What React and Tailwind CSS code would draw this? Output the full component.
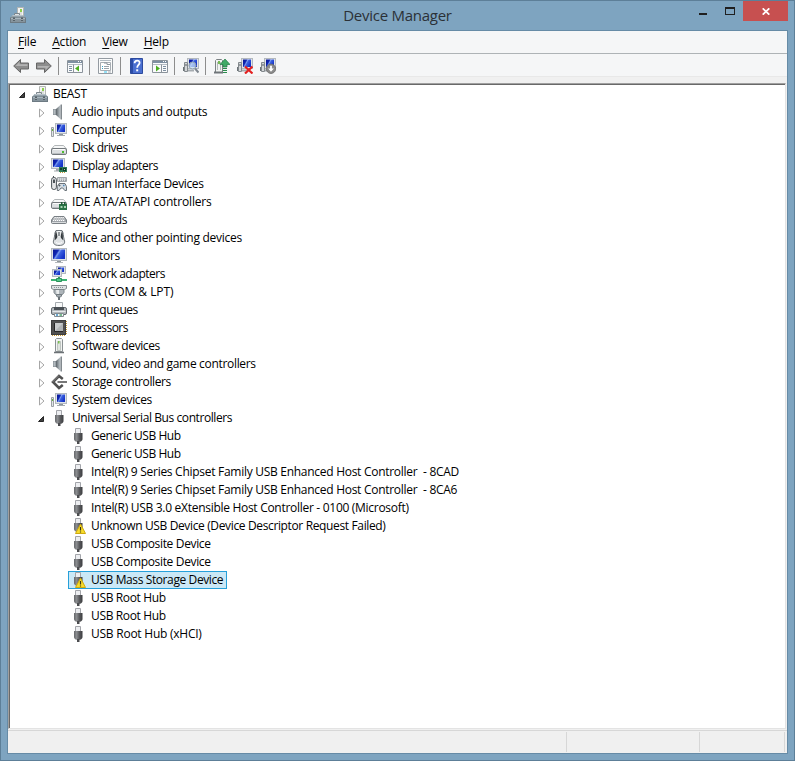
import { useId } from 'react'
import clsx from 'clsx'

function Svg({ children, className }) {
  return (
    <svg width="16" height="16" viewBox="0 0 16 16" className={clsx('block shrink-0', className)}>
      {children}
    </svg>
  )
}

// 16px device glyphs
function ToolboxIcon() {
  return (
    <Svg>
      <path d="M7.500.5h6v9h-6z" fill="#f3f4f3" stroke="#b2b5b3" />
      <path d="M10 2h2v3h-2z" fill="#8fcf4d" />
      <path d="M9 6h3M9 8h3" stroke="#c5cac6" />
      <path d="M4.500 9V6.500h5V9" fill="#dfe3e5" stroke="#7c868d" />
      <path d="M2.500 8h11l2.500 3H0z" fill="#93a1aa" />
      <path d="M2.500 8.500h11" stroke="#b7c2c9" />
      <path d="M0 10.500h16V16H0z" fill="#6d7a83" />
      <path d="M1 11h14v1.500H1z" fill="#a9b6be" />
      <path d="M1 12.500h14V15H1z" fill="#86949d" />
      <path d="M3 10.500h2V14H3zM11 10.500h2V14h-2z" fill="#56626a" />
      <path d="M3.500 12h1v1h-1zM11.500 12h1v1h-1z" fill="#dfe5e8" />
    </Svg>
  )
}

function SpeakerIcon() {
  const id = useId()
  return (
    <Svg>
      <linearGradient id={id}>
        <stop offset="0" stopColor="#5c6469" />
        <stop offset=".6" stopColor="#a3abb0" />
        <stop offset="1" stopColor="#cfd4d7" />
      </linearGradient>
      <path d="M2 5h3.500v6H2z" fill="#838b91" />
      <path d="M2.500 5.500h2v5h-2z" fill="#b3babf" />
      <path d="M5 5L10 .5v15L5 11z" fill={`url(#${id})`} />
      <path d="M9.700.5H11v15H9.700z" fill="#82898e" />
    </Svg>
  )
}

function Screen({ x = 4, y = 1, w = 12, h = 9 }) {
  const id = useId()
  return (
    <g>
      <linearGradient id={id} x1="0" y1="0" x2="1" y2=".5">
        <stop offset="0" stopColor="#0a1690" />
        <stop offset=".38" stopColor="#0f26b4" />
        <stop offset=".5" stopColor="#7c9cf0" />
        <stop offset=".62" stopColor="#3a60e0" />
        <stop offset="1" stopColor="#1634c8" />
      </linearGradient>
      <rect x={x + 0.5} y={y + 0.5} width={w - 1} height={h - 1} fill="#dfe3e8" stroke="#b3b9bf" />
      <rect x={x + 2} y={y + 1.5} width={w - 4} height={h - 3.5} fill={`url(#${id})`} />
    </g>
  )
}

function ComputerIcon() {
  return (
    <Svg>
      <Screen y={1} x={4} w={12} h={11} />
      <path d="M8 12h4v1H8z" fill="#8d969d" />
      <path d="M6 13.500h8" stroke="#a4abb0" />
      <path d="M.5 5.500h2v9h-2z" fill="#e3e6e8" stroke="#9ba0a4" />
      <path d="M1 7h1v2H1z" fill="#65b63f" />
    </Svg>
  )
}

function DriveShape() {
  return (
    <g>
      <path d="M3.500 5.500h9l3 3.500H.5z" fill="#f6f7f7" stroke="#b2b6b8" />
      <rect x=".5" y="8.500" width="15" height="6" rx="1.500" fill="#dcdfe1" stroke="#73797d" />
      <path d="M2 9.500h12" stroke="#fbfbfb" />
      <path d="M2 13.500h12" stroke="#b9bdc0" />
    </g>
  )
}

function DiskIcon() {
  return (
    <Svg>
      <DriveShape />
      <path d="M11 11h2v2h-2z" fill="#4cbb2e" />
    </Svg>
  )
}

function DisplayIcon() {
  return (
    <Svg>
      <Screen x={0} y={0} w={14} h={11} />
      <path d="M5 11h3v1.500H5zM3 12.500h6v1H3z" fill="#a0a7ac" />
      <path d="M8 9h8v5H8z" fill="#2c7a55" />
      <path d="M9 10h2v2H9zM12 10h3v3h-3z" fill="#123f2b" />
      <path d="M13 11h1v1h-1z" fill="#a4d7b8" />
      <path d="M9 14.500h6" stroke="#c59b3c" strokeDasharray="1" />
    </Svg>
  )
}

function HidIcon() {
  return (
    <Svg>
      <path d="M6.500 1.500h9v4h-9z" fill="#d6d9dc" stroke="#a2a7ab" />
      <path d="M8 3h7M8 4.500h7" stroke="#8d9398" strokeWidth=".8" strokeDasharray="1" />
      <path d="M2.500 0v3" stroke="#4a5157" />
      <rect x=".6" y="1.500" width="4.800" height="12" rx="2.200" fill="#e4e6e8" stroke="#4b5258" />
      <path d="M2 3.500h2v3.500H2z" fill="#4b5258" />
      <path d="M8 7.500h6l1.500 3v4h-1.700l-2-2.500h-1.800l-2 2.500H6.300v-4z" fill="#d3dae0" stroke="#5c656c" strokeWidth=".9" />
      <path d="M7.500 9.500h2M8.500 8.500v2" stroke="#4b545b" strokeWidth=".8" />
      <path d="M12 9.500h1.500" stroke="#4f89bd" strokeWidth="1.500" />
    </Svg>
  )
}

function IdeIcon() {
  return (
    <Svg>
      <DriveShape />
      <path d="M8 10h8v6H8z" fill="#2b7446" />
      <path d="M10 8h1.500v3H10zM13 8h1.500v3H13z" fill="#235f38" />
      <path d="M9.500 12h2v2h-2zM13 12h2v2h-2z" fill="#a9d4b3" />
    </Svg>
  )
}

function KeyboardIcon() {
  return (
    <Svg>
      <path d="M3 4.500h10l2.500 3.500v2.500c0 .6-.4 1-1 1h-13c-.6 0-1-.4-1-1V8z" fill="#9da2a7" stroke="#7a8085" />
      <path d="M3.500 5.500h9.500M2.500 7h11M2 8.500h12" stroke="#fff" strokeDasharray="1.300 .7" />
      <path d="M1 10.500h14" stroke="#d9dcde" />
    </Svg>
  )
}

function MouseIcon() {
  return (
    <Svg>
      <path d="M5 .5h6c1.800 2.500 1 5.500 2.200 9 1.500 4-.7 6-5.200 6s-6.700-2-5.200-6C4 6 3.200 3 5 .5z" fill="#dfe2e4" stroke="#6f767b" />
      <path d="M5 1c-1.500 3-.3 6-1.500 9.500C5 9.500 6.500 7.500 6.500 6z" fill="#33383c" />
      <path d="M11 1c1.500 3 .3 6 1.500 9.500C11 9.500 9.500 7.500 9.500 6z" fill="#33383c" />
      <path d="M6.500 1h3v5.500h-3z" fill="#f3f4f5" />
      <path d="M7.300 2h1.400v4H7.300z" fill="#686f74" />
      <path d="M5 12.500c1.800 1.200 4.200 1.200 6 0" fill="none" stroke="#fff" />
    </Svg>
  )
}

function MonitorIcon() {
  return (
    <Svg>
      <Screen x={0} y={0} w={16} h={13} />
      <path d="M6 13h4v1H6z" fill="#8f979c" />
      <path d="M4 14.500h8" stroke="#b5babd" />
    </Svg>
  )
}

function NetworkIcon() {
  return (
    <Svg>
      <Screen x={5} y={0} w={10} h={8} />
      <Screen x={1} y={3} w={10} h={8} />
      <path d="M8 11v2" stroke="#2f9c63" strokeWidth="2" />
      <path d="M0 14h16" stroke="#3bb273" strokeWidth="2" />
      <path d="M5.500 12.500h5v3h-5z" fill="#52c78a" stroke="#2b9058" />
    </Svg>
  )
}

function PortIcon() {
  return (
    <Svg>
      <path d="M.5 1.500h15v3l-2 1h-11l-2-1z" fill="#dde1e3" stroke="#858c90" />
      <path d="M3 3.500h10" stroke="#8b9297" strokeDasharray="1" />
      <path d="M3 5.500h10v3l-1.500 2h-7L3 8.500z" fill="#aeb5ba" stroke="#7d858a" />
      <path d="M5 6h3v4H5.500z" fill="#e8ebec" />
      <path d="M5.500 10.500h5V12l-1 1h-3l-1-1z" fill="#a3abb0" stroke="#737b80" />
      <path d="M8 13v3" stroke="#6b7378" strokeWidth="2" />
    </Svg>
  )
}

function PrinterIcon() {
  return (
    <Svg>
      <path d="M4.500.5h7v6h-7z" fill="#f8f9f9" stroke="#a7acb0" />
      <rect x=".5" y="5.500" width="15" height="7" rx="1.500" fill="#b3b8bc" stroke="#646a6f" />
      <path d="M3 5h10v3H3z" fill="#4a5055" />
      <path d="M1.500 9.500h13" stroke="#e6e8ea" />
      <path d="M3.500 11.500h9v3h-9z" fill="#f4f7f8" stroke="#858c91" />
      <path d="M5 13h2" stroke="#3b8dc4" strokeWidth="1.500" />
      <path d="M8.500 13H11" stroke="#4ea46a" strokeWidth="1.500" />
    </Svg>
  )
}

function CpuIcon() {
  return (
    <Svg>
      <path d="M15.500 1v14M1 15.500h14" stroke="#c79a35" strokeDasharray="1" />
      <path d="M0 0h15v15H0z" fill="#3d3d3d" />
      <path d="M1 1h13v13H1z" fill="#505050" />
      <path d="M4 3h8v8H4z" fill="#c9cbcc" />
      <path d="M4 11l8-8v8z" fill="#b0b3b4" />
      <path d="M3.500 3v8.500H12" fill="none" stroke="#262626" />
    </Svg>
  )
}

function SoftwareIcon() {
  return (
    <Svg>
      <path d="M4.500 1.500l1-1h5l1 1v12h-7z" fill="#f2f4f2" stroke="#8b9194" />
      <path d="M6.500 3.500h3v9h-3z" fill="#dfe4df" stroke="#bfc5c1" />
      <path d="M7 3h1.500v2.500H7z" fill="#79bf4f" />
      <path d="M3 14.500h10" stroke="#6c7276" strokeWidth="1.500" />
    </Svg>
  )
}

function StorageIcon() {
  return (
    <Svg>
      <path d="M11.800 5L8 2 2 8l6 6 3.800-3" fill="none" stroke="#505050" strokeWidth="2.600" />
      <path d="M8 1.500L1.500 8" stroke="#858585" />
      <path d="M6.500 7H16v2H6.500z" fill="#777" />
    </Svg>
  )
}

function UsbShape() {
  const id = useId()
  return (
    <g>
      <linearGradient id={id}>
        <stop offset="0" stopColor="#66686b" />
        <stop offset=".3" stopColor="#8b8d90" />
        <stop offset=".65" stopColor="#58595c" />
        <stop offset="1" stopColor="#3c3d40" />
      </linearGradient>
      <path d="M5.500.5h5v5h-5z" fill="#edeef1" stroke="#a3a5aa" />
      <path d="M4 5h8.500v6c0 1.500-1.200 2.500-2.500 2.800H6.500C5.200 13.500 4 12.500 4 11z" fill={`url(#${id})`} />
      <path d="M7 13h2.500v3H7z" fill="#4b4c4f" />
    </g>
  )
}

function UsbIcon() {
  return <Svg><UsbShape /></Svg>
}

function UsbWarningIcon() {
  return (
    <Svg>
      <UsbShape />
      <path d="M10.500 6l5 9.500h-10z" fill="#f7dc2a" stroke="#cfa90e" strokeLinejoin="round" />
      <path d="M10.500 9v3.500M10.500 13.500v1" stroke="#3a3415" strokeWidth="1.200" />
    </Svg>
  )
}

// Toolbar glyphs
function ArrowIcon({ flip }) {
  return (
    <Svg className={flip && 'rotate-180'}>
      <path d="M.7 8L7.500 1.500V5h8v6h-8v3.500z" fill="#8d8d8d" stroke="#666" strokeLinejoin="round" />
      <path d="M2.500 8L6.500 4v2.200h8V8z" fill="#b4b4b4" />
    </Svg>
  )
}

function PanelIcon({ right }) {
  return (
    <Svg>
      <path d="M.5 2.500h15v12H.5z" fill="#fafbfc" stroke="#8b939b" />
      <path d="M1 4h14" stroke="#7e8fa1" strokeWidth="2" />
      <path d="M11 3.500h1M13 3.500h1" stroke="#fff" />
      <path d="M1 6.500h14" stroke="#b4bcc4" />
      {right ? (
        <>
          <path d="M9.500 6.500v8" stroke="#8b939b" />
          <path d="M11 8.500h3M11 10.500h3M11 12.500h3" stroke="#7e8fa1" />
          <path d="M4 7.500v6l4-3z" fill="#4cae1f" />
        </>
      ) : (
        <>
          <path d="M6.500 6.500v8" stroke="#8b939b" />
          <path d="M2 8.500h3M2 10.500h3M2 12.500h3" stroke="#7e8fa1" />
          <path d="M12 7.500v6l-4-3z" fill="#4cae1f" />
        </>
      )}
    </Svg>
  )
}

function PropertiesIcon() {
  return (
    <Svg>
      <path d="M.5.5h14v15H.5z" fill="#fbfcfc" stroke="#949ba2" />
      <path d="M2 2.500h11" stroke="#b3bcc4" />
      <path d="M2.500 4.500h10v8h-10z" fill="#fff" stroke="#a7adb3" />
      <path d="M6 5h3v1.500h3" fill="none" stroke="#8d969f" />
      <path d="M4 8.500h1M4 10.500h1" stroke="#36a3c9" />
      <path d="M6 8.500h5M6 10.500h5" stroke="#9aa3ab" />
      <path d="M6 14h3" stroke="#30c4ee" />
      <path d="M10 14h3" stroke="#a7adb3" />
    </Svg>
  )
}

function HelpIcon() {
  return (
    <Svg>
      <path d="M1.500.5h12v15h-12z" fill="#4a6fd0" stroke="#2c4a9e" />
      <path d="M2 1h2v14H2z" fill="#2b4ba6" />
      <path d="M5.600 5.200c0-3.600 5.400-3.400 5-.3-.2 2-2.400 2.200-2.400 4.800" fill="none" stroke="#fff" strokeWidth="1.800" />
      <path d="M7.200 11.300h2v2h-2z" fill="#fff" />
    </Svg>
  )
}

function TowerScreen() {
  return (
    <>
      <Screen x={4} y={0} w={12} h={11} />
      <path d="M5 12.500h6" stroke="#a6acb0" strokeWidth="2" />
      <path d="M1.500 4.500h3v9h-3z" fill="#d3d6d8" stroke="#83898d" />
      <path d="M.5 9v4" stroke="#6b7277" />
      <path d="M2.500 6h1v2h-1z" fill="#565d62" />
    </>
  )
}

function ScanIcon() {
  return (
    <Svg>
      <TowerScreen />
      <path d="M12 10.500l3.500 4" stroke="#808890" strokeWidth="2" />
      <circle cx="9.500" cy="7.500" r="3.500" fill="#cfe7f6" fillOpacity=".7" stroke="#91a1ae" />
    </Svg>
  )
}

function UpdateIcon() {
  return (
    <Svg>
      <path d="M1.500 2.500l1-1h5l1 1v12h-7z" fill="#f1f3f1" stroke="#7b8184" />
      <path d="M3.500 4v8M6.500 4v8" stroke="#b3b9b9" />
      <path d="M4 3h2v3H4z" fill="#77b956" />
      <path d="M0 14.500h9" stroke="#6f7579" strokeWidth="2" />
      <path d="M11 1l5 5.500h-3V9H9V6.500H6z" fill="#3faa66" stroke="#237a45" strokeWidth=".7" />
      <path d="M9 10.500h4M9 12.500h4M9 14.500h4" stroke="#2b8b4c" />
    </Svg>
  )
}

function UninstallIcon() {
  return (
    <Svg>
      <TowerScreen />
      <path d="M8 8.500l7.500 7M15.500 8.500l-7.500 7" stroke="#e32020" strokeWidth="2.200" />
    </Svg>
  )
}

function DisableIcon() {
  return (
    <Svg>
      <TowerScreen />
      <circle cx="11" cy="10.800" r="4.700" fill="#8b8b8b" stroke="#686868" strokeWidth=".8" />
      <path d="M10.100 7.800h1.800v2.700h2L11 13.800l-2.900-3.300h2z" fill="#fff" />
    </Svg>
  )
}

const devices = [
  { label: 'BEAST', icon: ToolboxIcon, level: 0, open: true, tracking: 'tracking-[-0.3px]' },
  { label: 'Audio inputs and outputs', icon: SpeakerIcon, tracking: 'tracking-[-0.28px]' },
  { label: 'Computer', icon: ComputerIcon, tracking: 'tracking-[-0.2px]' },
  { label: 'Disk drives', icon: DiskIcon, tracking: 'tracking-[-0.45px]' },
  { label: 'Display adapters', icon: DisplayIcon, tracking: 'tracking-[-0.46px]' },
  { label: 'Human Interface Devices', icon: HidIcon, tracking: 'tracking-[-0.37px]' },
  { label: 'IDE ATA/ATAPI controllers', icon: IdeIcon, tracking: 'tracking-[-0.16px]' },
  { label: 'Keyboards', icon: KeyboardIcon, tracking: 'tracking-[-0.48px]' },
  { label: 'Mice and other pointing devices', icon: MouseIcon, tracking: 'tracking-[-0.26px]' },
  { label: 'Monitors', icon: MonitorIcon, tracking: 'tracking-[-0.33px]' },
  { label: 'Network adapters', icon: NetworkIcon, tracking: 'tracking-[-0.47px]' },
  { label: 'Ports (COM & LPT)', icon: PortIcon, tracking: 'tracking-[-0.04px]' },
  { label: 'Print queues', icon: PrinterIcon, tracking: 'tracking-[-0.44px]' },
  { label: 'Processors', icon: CpuIcon, tracking: 'tracking-[-0.52px]' },
  { label: 'Software devices', icon: SoftwareIcon, tracking: 'tracking-[-0.39px]' },
  { label: 'Sound, video and game controllers', icon: SpeakerIcon, tracking: 'tracking-[-0.32px]' },
  { label: 'Storage controllers', icon: StorageIcon, tracking: 'tracking-[-0.38px]' },
  { label: 'System devices', icon: ComputerIcon, tracking: 'tracking-[-0.35px]' },
  { label: 'Universal Serial Bus controllers', icon: UsbIcon, open: true, tracking: 'tracking-[-0.42px]' },
  { label: 'Generic USB Hub', icon: UsbIcon, level: 2, tracking: 'tracking-[-0.43px]' },
  { label: 'Generic USB Hub', icon: UsbIcon, level: 2, tracking: 'tracking-[-0.43px]' },
  { label: 'Intel(R) 9 Series Chipset Family USB Enhanced Host Controller  - 8CAD', icon: UsbIcon, level: 2, tracking: 'tracking-[-0.28px]' },
  { label: 'Intel(R) 9 Series Chipset Family USB Enhanced Host Controller  - 8CA6', icon: UsbIcon, level: 2, tracking: 'tracking-[-0.28px]' },
  { label: 'Intel(R) USB 3.0 eXtensible Host Controller - 0100 (Microsoft)', icon: UsbIcon, level: 2, tracking: 'tracking-[-0.29px]' },
  { label: 'Unknown USB Device (Device Descriptor Request Failed)', icon: UsbWarningIcon, level: 2, tracking: 'tracking-[-0.36px]' },
  { label: 'USB Composite Device', icon: UsbIcon, level: 2, tracking: 'tracking-[-0.34px]' },
  { label: 'USB Composite Device', icon: UsbIcon, level: 2, tracking: 'tracking-[-0.34px]' },
  { label: 'USB Mass Storage Device', icon: UsbWarningIcon, level: 2, selected: true, tracking: 'tracking-[-0.39px]' },
  { label: 'USB Root Hub', icon: UsbIcon, level: 2, tracking: 'tracking-[-0.35px]' },
  { label: 'USB Root Hub', icon: UsbIcon, level: 2, tracking: 'tracking-[-0.35px]' },
  { label: 'USB Root Hub (xHCI)', icon: UsbIcon, level: 2, tracking: 'tracking-[-0.24px]' },
]

function Expander({ open }) {
  return (
    <svg width="8" height="10" viewBox="0 0 8 10" className="mt-0.5 block shrink-0">
      {open ? (
        <path d="M6.500 2.500v5h-5z" fill="#404040" stroke="#262626" />
      ) : (
        <path d="M2.500 1v8l4.500-4z" fill="#fff" stroke="#a6a6a6" />
      )}
    </svg>
  )
}

function DeviceRow({ label, icon: Icon, level = 1, open, selected, tracking }) {
  return (
    <div className={clsx('flex h-[18px] items-center', level === 0 && 'pl-2', level === 1 && 'pl-[27px]', level === 2 && 'pl-[58px]')}>
      {level < 2 && (
        <div className="mr-1.5 flex w-2">
          <Expander open={open} />
        </div>
      )}
      <div
        className={clsx(
          'flex h-[18px] items-center border pl-px pr-[3px]',
          level < 2 && '-ml-0.5',
          selected ? 'border-[#26a0da] bg-[#cbe8f6]' : 'border-transparent'
        )}
      >
        <Icon />
        <span className={clsx('ml-[5px] whitespace-pre', tracking)}>{label}</span>
      </div>
    </div>
  )
}

function ToolSeparator({ className }) {
  return <div className={clsx('h-[18px] w-px bg-[#8d8d8d]', className)} />
}

export default function App() {
  return (
    <div className="flex h-[761px] w-[795px] flex-col border border-[#5d7f98] bg-[#7ea4c0] font-['Open_Sans','Noto_Sans',sans-serif] text-[12px] leading-[18px] tracking-[-0.2px] text-black">
      <header className="flex h-[29px] shrink-0 items-start">
        <div className="w-[105px] shrink-0 pl-[9px] pt-1.5">
          <ToolboxIcon />
        </div>
        <h1 className="grow pt-[3px] text-center text-[15px] leading-[22px] tracking-[-0.26px] text-[#2b3137]">Device Manager</h1>
        <div className="flex w-[105px] shrink-0">
          <div className="flex w-[27px] justify-center pt-3">
            <div className="h-0.5 w-2 bg-[#1f1f1f]" />
          </div>
          <div className="flex w-[27px] justify-center pt-1.5">
            <div className="h-2 w-2.5 border border-t-2 border-[#1f1f1f]" />
          </div>
          <button className="flex h-5 w-[45px] items-center justify-center bg-[#c75050]">
            <svg width="8" height="7" viewBox="0 0 8 7">
              <path d="M.7.3l6.600 6.400M7.300.3L.7 6.700" stroke="#fff" strokeWidth="1.700" />
            </svg>
          </button>
        </div>
      </header>

      <main className="mx-1.5 mb-1.5 flex grow flex-col border border-[#668ba6] bg-[#f0f0f0]">
        <nav className="flex h-[23px] shrink-0 gap-4 border-b border-[#aeb3b6] bg-[#f5f6f7] pl-2.5 pt-0.5">
          {['File', 'Action', 'View', 'Help'].map((item) => (
            <span key={item}>
              <span className="underline underline-offset-2">{item[0]}</span>
              {item.slice(1)}
            </span>
          ))}
        </nav>

        <div className="flex h-[23px] shrink-0 items-center border-b border-[#e8e8e8] bg-[#f5f6f7] pl-[5px] pt-0.5">
          <ArrowIcon />
          <div className="w-[7px]" />
          <ArrowIcon flip />
          <ToolSeparator className="ml-[6px] mr-2" />
          <PanelIcon />
          <ToolSeparator className="ml-1.5 mr-2" />
          <PropertiesIcon />
          <ToolSeparator className="ml-1.5 mr-2" />
          <HelpIcon />
          <div className="w-[7px]" />
          <PanelIcon right />
          <ToolSeparator className="ml-1.5 mr-2" />
          <ScanIcon />
          <ToolSeparator className="ml-1.5 mr-2" />
          <div className="flex gap-[7px]">
            <UpdateIcon />
            <UninstallIcon />
            <DisableIcon />
          </div>
        </div>

        <div className="mt-1.5 mr-px flex grow flex-col border-b border-l border-r border-t border-b-[#e3e3e3] border-l-[#a0a0a0] border-r-[#e3e3e3] border-t-[#a0a0a0] bg-white">
          <div className="grow border-l border-t border-[#696969]">
            {devices.map((device, i) => (
              <DeviceRow key={i} {...device} />
            ))}
          </div>
        </div>

        <footer className="mt-px flex h-[23px] shrink-0 border-t border-[#d7d7d7] py-px">
          <div className="w-[559px] border-r border-[#d7d7d7]" />
          <div className="w-[133px] border-r border-[#d7d7d7]" />
          <div className="w-[85px] border-r border-[#d7d7d7]" />
        </footer>
      </main>
    </div>
  )
}
